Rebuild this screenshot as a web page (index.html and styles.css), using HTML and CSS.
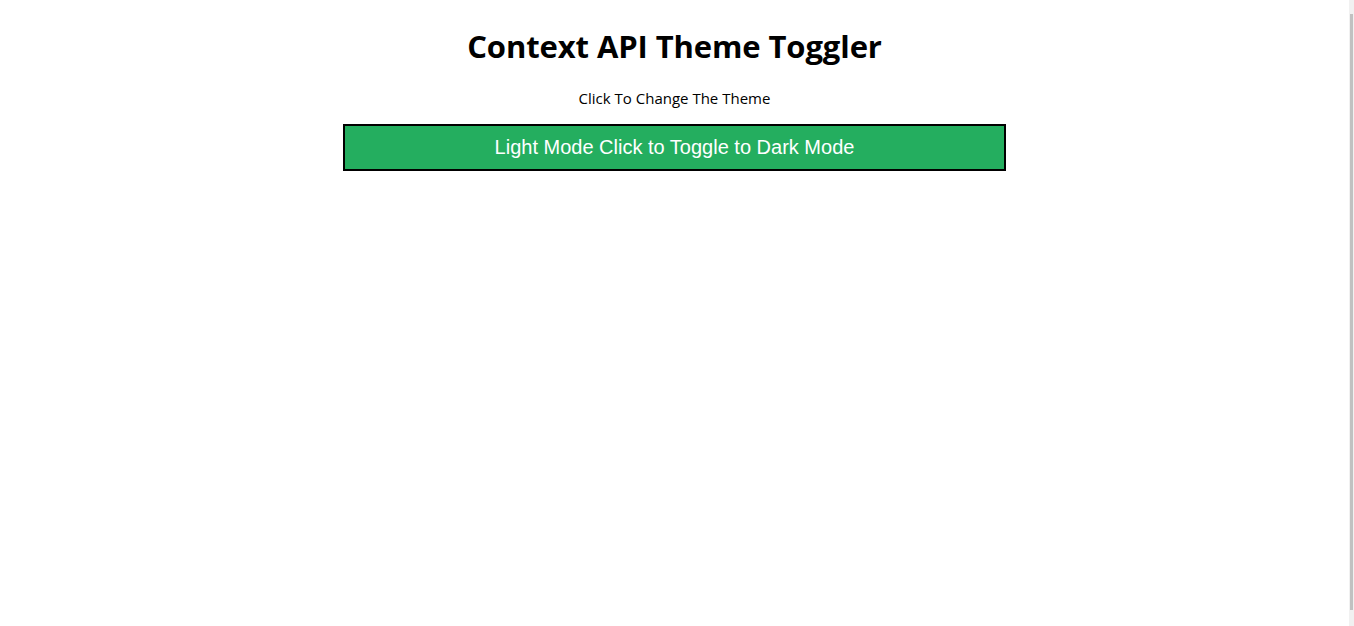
FILE: index.html
```html
<!DOCTYPE html>
<html>
<head>
<meta charset="utf-8">
<link rel="stylesheet" href="styles.css">
</head>
<body>
<div class="page">
  <main class="app">
    <h1 class="title">Context API Theme Toggler</h1>
    <p class="hint">Click To Change The Theme</p>
    <button class="toggle">Light Mode Click to Toggle to Dark Mode</button>
  </main>
  <div class="scrollbar"><div class="thumb"></div></div>
</div>
</body>
</html>
```
FILE: styles.css
```css
html, body {
  margin: 0;
  padding: 0;
  height: 100%;
  background: #ffffff;
  overflow: hidden;
}
.page {
  display: flex;
  height: 626px;
}
.app {
  flex: 1;
  display: flex;
  flex-direction: column;
  align-items: center;
  font-family: "Open Sans", "Noto Sans", sans-serif;
  color: #000;
  padding-top: 26px;
}
.title {
  margin: 0;
  font-size: 31px;
  font-weight: 700;
  line-height: 40px;
  letter-spacing: -0.1px;
}
.hint {
  margin: 21px 0 0;
  font-size: 15px;
  line-height: 22px;
}
.toggle {
  margin-top: 15px;
  width: 663px;
  height: 47px;
  background: #24ae5f;
  border: 2px solid #000;
  color: #fff;
  font-family: "Liberation Sans", Arial, sans-serif;
  font-size: 20px;
  padding: 0;
  cursor: pointer;
}
.scrollbar {
  width: 5px;
  background: #f1f1f1;
  display: flex;
  flex-direction: column;
  padding: 14px 0 16px;
  box-sizing: border-box;
}
.thumb {
  flex: 1;
  margin-left: 1px;
  width: 3px;
  background: #c1c1c1;
}
```
